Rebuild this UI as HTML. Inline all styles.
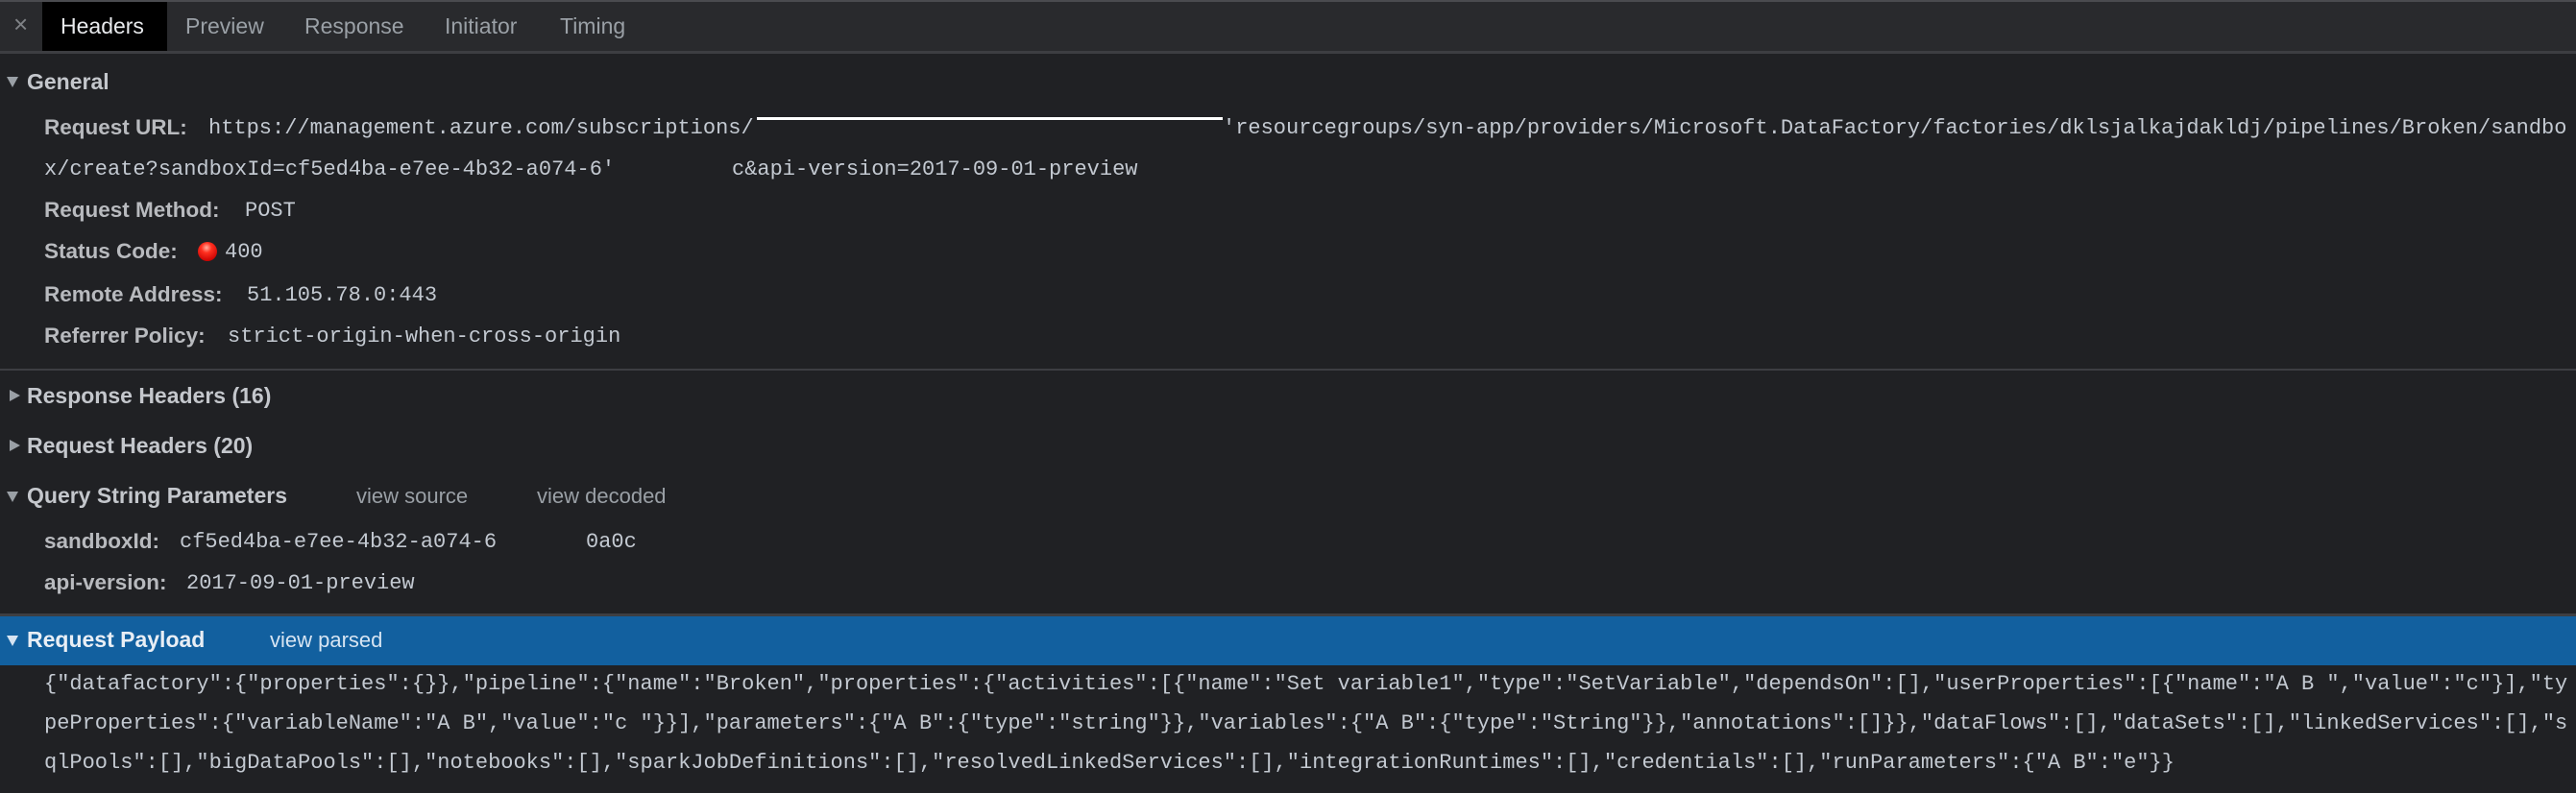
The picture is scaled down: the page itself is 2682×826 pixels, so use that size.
<!DOCTYPE html>
<html><head><meta charset="utf-8"><style>
html,body{margin:0;padding:0;}
body{width:2682px;height:826px;background:#202124;position:relative;overflow:hidden;font-family:"Liberation Sans",sans-serif;}
.a{position:absolute;white-space:pre;}
.tab{font-size:23px;color:#9aa0a6;top:14px;}
.sec{font-size:23px;font-weight:bold;color:#c4c7cc;left:28px;}
.lbl{font-size:22.5px;font-weight:bold;color:#b8babe;left:46px;}
.m{font-family:"Liberation Mono",monospace;font-size:22px;color:#c3c9d1;}
.tri{position:absolute;width:0;height:0;}
.down{border-left:6px solid transparent;border-right:6px solid transparent;border-top:11px solid #9aa0a6;left:7px;}
.right{border-top:6px solid transparent;border-bottom:6px solid transparent;border-left:11px solid #9aa0a6;left:10px;}
.link{font-size:22px;color:#9aa0a6;}
</style></head><body>
<div class="a" style="left:0;top:0;width:2682px;height:2px;background:#4a4b4f"></div>
<div class="a" style="left:0;top:2px;width:2682px;height:51px;background:#292a2d"></div>
<div class="a" style="left:0;top:53px;width:2682px;height:3px;background:#3d3e42"></div>
<div class="a" style="left:44px;top:2px;width:130px;height:51px;background:#000"></div>
<div class="a" style="left:14px;top:10px;font-size:26px;color:#7f8286">×</div>
<div class="a tab" style="left:63px;color:#e8eaed">Headers</div>
<div class="a tab" style="left:193px">Preview</div>
<div class="a tab" style="left:317px">Response</div>
<div class="a tab" style="left:463px">Initiator</div>
<div class="a tab" style="left:583px">Timing</div>

<div class="tri down" style="top:80px"></div>
<div class="a sec" style="top:72px">General</div>
<div class="a lbl" style="top:120px">Request URL:</div>
<div class="a m" style="left:217px;top:121px">https://management.azure.com/subscriptions/</div>
<div class="a" style="left:788px;top:122px;width:485px;height:3px;background:#fff"></div>
<div class="a m" style="left:1273px;top:121px">'resourcegroups/syn-app/providers/Microsoft.DataFactory/factories/dklsjalkajdakldj/pipelines/Broken/sandbo</div>
<div class="a m" style="left:46px;top:164px">x/create?sandboxId=cf5ed4ba-e7ee-4b32-a074-6'</div>
<div class="a m" style="left:762px;top:164px">c&amp;api-version=2017-09-01-preview</div>
<div class="a lbl" style="top:206px">Request Method:</div>
<div class="a m" style="left:255px;top:207px">POST</div>
<div class="a lbl" style="top:249px">Status Code:</div>
<div class="a" style="left:206px;top:252px;width:20px;height:20px;border-radius:50%;background:radial-gradient(circle at 45% 30%,#ffb0a0 0,#ff3020 30%,#c80000 80%,#900 100%)"></div>
<div class="a m" style="left:234px;top:250px">400</div>
<div class="a lbl" style="top:294px">Remote Address:</div>
<div class="a m" style="left:257px;top:295px">51.105.78.0:443</div>
<div class="a lbl" style="top:337px">Referrer Policy:</div>
<div class="a m" style="left:237px;top:338px">strict-origin-when-cross-origin</div>

<div class="a" style="left:0;top:384px;width:2682px;height:2px;background:#3d3e42"></div>
<div class="tri right" style="top:406px"></div>
<div class="a sec" style="top:399px">Response Headers (16)</div>
<div class="tri right" style="top:458px"></div>
<div class="a sec" style="top:451px">Request Headers (20)</div>
<div class="tri down" style="top:512px"></div>
<div class="a sec" style="top:503px">Query String Parameters</div>
<div class="a link" style="left:371px;top:504px">view source</div>
<div class="a link" style="left:559px;top:504px">view decoded</div>
<div class="a lbl" style="top:551px">sandboxId:</div>
<div class="a m" style="left:187px;top:552px">cf5ed4ba-e7ee-4b32-a074-6</div>
<div class="a m" style="left:610px;top:552px">0a0c</div>
<div class="a lbl" style="top:594px">api-version:</div>
<div class="a m" style="left:194px;top:595px">2017-09-01-preview</div>

<div class="a" style="left:0;top:639px;width:2682px;height:3px;background:#3d3e42"></div>
<div class="a" style="left:0;top:642px;width:2682px;height:51px;background:#12609f"></div>
<div class="tri down" style="top:662px;border-top-color:#d6e4f2"></div>
<div class="a sec" style="top:653px;color:#e8eef5">Request Payload</div>
<div class="a link" style="left:281px;top:654px;color:#d6e4f2">view parsed</div>
<div class="a m" style="left:46px;top:700px">{"datafactory":{"properties":{}},"pipeline":{"name":"Broken","properties":{"activities":[{"name":"Set variable1","type":"SetVariable","dependsOn":[],"userProperties":[{"name":"A B ","value":"c"}],"ty</div>
<div class="a m" style="left:46px;top:741px">peProperties":{"variableName":"A B","value":"c "}}],"parameters":{"A B":{"type":"string"}},"variables":{"A B":{"type":"String"}},"annotations":[]}},"dataFlows":[],"dataSets":[],"linkedServices":[],"s</div>
<div class="a m" style="left:46px;top:782px">qlPools":[],"bigDataPools":[],"notebooks":[],"sparkJobDefinitions":[],"resolvedLinkedServices":[],"integrationRuntimes":[],"credentials":[],"runParameters":{"A B":"e"}}</div>
</body></html>
